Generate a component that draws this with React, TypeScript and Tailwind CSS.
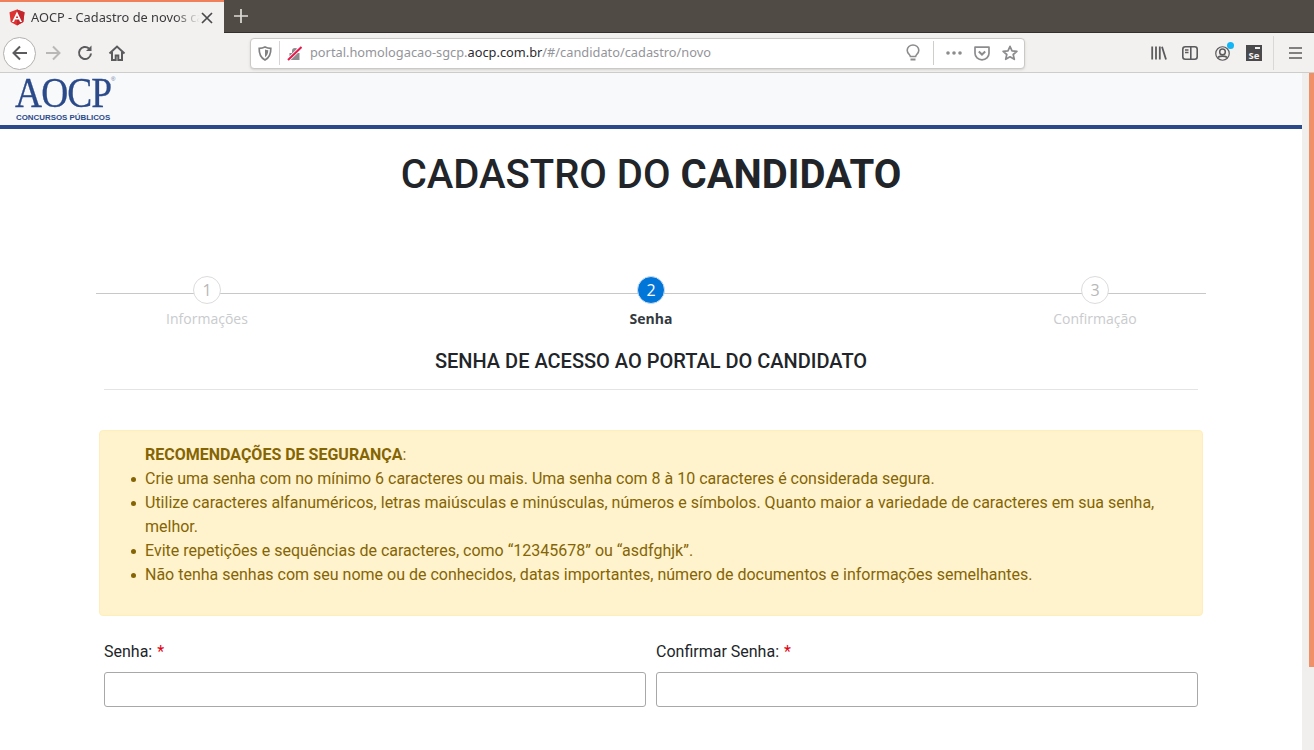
import React from "react";

const I = "#5b5b5d";
const U = "#8c8c8e";

function Favicon() {
  return (
    <svg width="16" height="17" viewBox="0 0 16 17" className="shrink-0">
      <path d="M8 0.5 L15.5 3.2 L14.3 13 L8 16.5 L1.7 13 L0.5 3.2 Z" fill="#dd3333" />
      <path d="M8 0.5 L15.5 3.2 L14.3 13 L8 16.5 Z" fill="#c3262c" />
      <path fillRule="evenodd" d="M8 2.4 L13 13 H11 L10 10.5 H6 L5 13 H3 Z M8 6.4 L6.8 9.1 H9.2 Z" fill="#fff" />
    </svg>
  );
}

function Toolbar() {
  return (
    <div className="flex h-10 shrink-0 items-center border-b border-[#cfcdca] bg-[#f3f1ef] pt-px">
      <div className="ml-[3px] flex h-[33px] w-[33px] items-center justify-center rounded-full border border-[#b3b1af] bg-white">
        <svg width="18" height="18" viewBox="0 0 18 18" fill="none" stroke={I} strokeWidth="2">
          <path d="M16 9H2.5M9 2.5 2.5 9 9 15.5" />
        </svg>
      </div>
      <svg className="ml-[8px]" width="18" height="18" viewBox="0 0 18 18" fill="none" stroke="#b9b8b6" strokeWidth="2">
        <path d="M2 9h13.5M9 2.5 15.5 9 9 15.5" />
      </svg>
      <svg className="ml-[14px]" width="18" height="18" viewBox="0 0 18 18" fill="none" stroke={I} strokeWidth="2">
        <path d="M15 9.5A6 6 0 1 1 13 4.5" />
        <path d="M15.5 1.5v5.5h-5.5z" fill={I} stroke="none" />
      </svg>
      <svg className="ml-[14px]" width="18" height="18" viewBox="0 0 18 18" fill="none" stroke={I} strokeWidth="2">
        <path d="M1.5 9.5 9 2.5l7.5 7" />
        <path d="M4 8v8h3.7v-4.5h2.6V16H14V8" />
      </svg>

      <div className="ml-[124px] flex h-[31px] w-[775px] items-center rounded border border-[#cbc9c6] bg-white shadow-sm">
        <svg className="ml-[7px]" width="14" height="15" viewBox="0 0 14 15" fill="none" stroke="#808082" strokeWidth="1.7">
          <path d="M7 1c2 1 4 1.3 5.8 1.3C13 8 11 12 7 14 3 12 1 8 1.2 2.3 3 2.3 5 2 7 1Z" />
          <path d="M7 3.5c1 .5 2 .7 3.3.8C10.2 7.5 9 10 7 11.3Z" fill="#808082" stroke="none" />
        </svg>
        <div className="ml-[7px] h-[24px] w-px bg-[#d8d6d4]" />
        <svg className="ml-[7px]" width="15" height="15" viewBox="0 0 15 15">
          <path d="M5 7V5a3 3 0 0 1 6 0v2h1.5v7h-10V7Z" fill={U} />
          <path d="M1 14 14.5 1" stroke="#ffffff" strokeWidth="3.6" />
          <path d="M1 14 14.5 1" stroke="#e8174b" strokeWidth="2" />
        </svg>
        <span className="ml-[8px] whitespace-nowrap font-['Noto_Sans',sans-serif] text-[12.8px] text-[#94949a]">
          portal.homologacao-sgcp.<span className="text-[#2c2c30]">aocp.com.br</span>/#/candidato/cadastro/novo
        </span>
        <div className="flex-1" />
        <svg width="14" height="18" viewBox="0 0 14 18" fill="none" stroke={U} strokeWidth="1.6">
          <path d="M4.4 12.5C4 10.5 1.2 9.5 1.2 6.2a5.8 5.2 0 0 1 11.6 0c0 3.3-2.8 4.3-3.2 6.3Z" />
          <path d="M4.5 15.5h5" strokeWidth="2" />
        </svg>
        <div className="ml-[13px] h-[24px] w-px bg-[#d0cecc]" />
        <svg className="ml-[12px]" width="16" height="4" viewBox="0 0 16 4" fill={U}>
          <circle cx="2" cy="2" r="1.8" />
          <circle cx="8" cy="2" r="1.8" />
          <circle cx="14" cy="2" r="1.8" />
        </svg>
        <svg className="ml-[12px]" width="16" height="15" viewBox="0 0 16 15" fill="none" stroke={U} strokeWidth="1.7">
          <path d="M1 1.2h14v6a7 6.6 0 0 1-14 0Z" strokeLinejoin="round" />
          <path d="M4.8 5.6 8 8.6l3.2-3" strokeWidth="2" />
        </svg>
        <svg className="ml-[12px]" width="16" height="16" viewBox="0 0 16 16" fill="none" stroke={U} strokeWidth="1.7" strokeLinejoin="round">
          <path d="M8 1.3 10 5.8l4.9.5-3.7 3.2 1.1 4.8L8 11.8l-4.3 2.5 1.1-4.8L1.1 6.3 6 5.8Z" />
        </svg>
        <div className="w-[6px]" />
      </div>

      <svg className="ml-[126px]" width="16" height="14" viewBox="0 0 16 14" stroke={I} strokeWidth="1.8" fill="none">
        <path d="M1.2 0.5v13M5 0.5v13M8.8 0.5v13M11 0.8l4 12.6" />
      </svg>
      <svg className="ml-[15px]" width="16" height="14" viewBox="0 0 16 14" fill="none" stroke={I} strokeWidth="1.6">
        <rect x="0.8" y="0.8" width="14.4" height="12.4" rx="2.5" />
        <path d="M8.8 1v12" />
        <path d="M3 4h3.5M3 6.5h3.5" strokeWidth="1.4" />
      </svg>
      <div className="relative ml-[17px] h-[15px] w-[15px]">
        <svg width="15" height="15" viewBox="0 0 16 16" fill="none" stroke={I} strokeWidth="1.3">
          <circle cx="8" cy="8" r="7.2" />
          <circle cx="8" cy="6.3" r="3" fill="none" strokeWidth="1.6" />
          <path d="M3.2 12.5c1-2.2 8.6-2.2 9.6 0" strokeWidth="2" />
        </svg>
        <div className="absolute -top-[4px] -right-[4px] h-[7px] w-[7px] rounded-full bg-[#12b5f5]" />
      </div>
      <div className="relative ml-[16px] flex h-[16px] w-[16px] flex-col items-center justify-end bg-[#4a4a4c] font-['Noto_Sans',sans-serif] text-[9.5px] font-bold leading-[11px] text-[#f3f1ef]">
        Se
        <div className="absolute right-[2px] top-[2px] h-[2px] w-[5px] bg-[#f3f1ef]" />
      </div>
      <div className="ml-[11px] h-[34px] w-px bg-[#dad8d6]" />
      <svg className="ml-[15px]" width="13" height="12" viewBox="0 0 13 12" stroke={I} strokeWidth="1.7">
        <path d="M0 1h13M0 6h13M0 11h13" />
      </svg>
    </div>
  );
}

function Step({ n, label, active }: { n: number; label: string; active?: boolean }) {
  return (
    <div className="-mt-[18px] flex w-[222px] flex-col items-center">
      <div
        className={
          active
            ? "flex h-[28px] w-[28px] items-center justify-center rounded-full border border-[#c9dff2] bg-[#0275d8] font-['Open_Sans',sans-serif] text-[16px] text-white"
            : "flex h-[28px] w-[28px] items-center justify-center rounded-full border border-[#dcdcdc] bg-white font-['Open_Sans',sans-serif] text-[16px] text-[#b8b8b8]"
        }
      >
        {n}
      </div>
      <div
        className={
          active
            ? "mt-[5px] font-['Open_Sans',sans-serif] text-[14px] font-bold leading-[19px] text-[#343a40]"
            : "mt-[5px] font-['Open_Sans',sans-serif] text-[14px] leading-[19px] text-[#c9cbcd]"
        }
      >
        {label}
      </div>
    </div>
  );
}

function Field({ label }: { label: string }) {
  return (
    <div className="flex w-[542px] flex-col">
      <div className="h-[24px] text-[16px] leading-[24px] text-[#212529]">
        {label}: <span className="ml-px text-[#e3000f]">*</span>
      </div>
      <input className="mt-[8px] h-[35px] rounded-[3px] border border-[#a8a8a8] bg-white" />
    </div>
  );
}

const li =
  "before:absolute before:-ml-[14px] before:mt-[10px] before:h-[5px] before:w-[5px] before:rounded-full before:bg-[#856404] before:content-['']";

export default function App() {
  return (
    <div className="flex h-[750px] w-[1314px] flex-col overflow-hidden bg-white font-['Roboto',sans-serif]">
      <div className="flex h-[33px] shrink-0 bg-[#504c45]">
        <div className="flex h-[33px] w-[224px] items-center border-t-2 border-[#f0805c] bg-[#f3f1ef] pl-[9px]">
          <Favicon />
          <span className="ml-[6px] w-[169px] overflow-hidden whitespace-nowrap font-['Noto_Sans',sans-serif] text-[12.8px] text-[#3a3a3c] [mask-image:linear-gradient(to_right,black_85%,transparent)]">
            AOCP - Cadastro de novos candidatos
          </span>
          <svg width="12" height="12" viewBox="0 0 12 12" className="ml-[1px]" stroke="#4a4a4c" strokeWidth="1.7">
            <path d="M1 1l10 10M11 1 1 11" />
          </svg>
        </div>
        <div className="flex flex-1 border-b border-[#33312d]">
          <svg width="14" height="14" viewBox="0 0 14 14" className="ml-[10px] mt-[9px]" stroke="#dedcd8" strokeWidth="1.7">
            <path d="M7 0v14M0 7h14" />
          </svg>
        </div>
      </div>
      <Toolbar />

      <div className="flex min-h-0 flex-1">
        <div className="flex min-w-0 flex-1 flex-col">
          <div className="flex h-[52px] shrink-0 flex-col bg-[#f8f9fb] pl-[15px] font-['Liberation_Serif',serif] text-[#2a4a8a]">
            <div className="relative mt-px h-[38px] w-[100px]">
              <div className="origin-left scale-x-[0.87] whitespace-nowrap text-[43px] leading-[38px] tracking-[-1px] [-webkit-text-stroke:0.3px_#2a4a8a]">AOCP</div>
              <span className="absolute -top-px left-[96px] font-['Liberation_Sans',sans-serif] text-[6px] leading-[12px] text-[#5f75a5]">®</span>
            </div>
            <div className="mt-px whitespace-nowrap pl-px font-['Liberation_Sans',sans-serif] text-[7.9px] font-bold leading-[10px]">
              CONCURSOS PÚBLICOS
            </div>
          </div>
          <div className="h-[4px] shrink-0 bg-[#2a4a8a]" />

          <h1 className="mt-[22px] h-[48px] text-center text-[40px] font-medium leading-[48px] text-[#212529]">
            CADASTRO DO <span className="font-bold">CANDIDATO</span>
          </h1>

          <div className="mx-[96px] mt-[94px] flex justify-between border-t border-[#c8c8c8]">
            <Step n={1} label="Informações" />
            <Step n={2} label="Senha" active />
            <Step n={3} label="Confirmação" />
          </div>

          <h2 className="mt-[21px] text-center text-[20px] font-medium leading-[24px] text-[#212529]">
            SENHA DE ACESSO AO PORTAL DO CANDIDATO
          </h2>
          <hr className="mx-[104px] mt-[16px] border-[#e4e4e4]" />

          <div className="mx-[99px] mt-[40px] h-[186px] rounded border border-[#ffeeba] bg-[#fff3cd] pl-[45px] pr-[40px] pt-[12px] text-[16px] leading-[24px] text-[#856404]">
            <div>
              <strong className="font-bold">RECOMENDAÇÕES DE SEGURANÇA</strong>:
            </div>
            <ul className="list-none">
              <li className={li}>Crie uma senha com no mínimo 6 caracteres ou mais. Uma senha com 8 à 10 caracteres é considerada segura.</li>
              <li className={li}>Utilize caracteres alfanuméricos, letras maiúsculas e minúsculas, números e símbolos. Quanto maior a variedade de caracteres em sua senha, melhor.</li>
              <li className={li}>Evite repetições e sequências de caracteres, como “12345678” ou “asdfghjk”.</li>
              <li className={li}>Não tenha senhas com seu nome ou de conhecidos, datas importantes, número de documentos e informações semelhantes.</li>
            </ul>
          </div>

          <div className="mx-[104px] mt-[24px] flex gap-[10px]">
            <Field label="Senha" />
            <Field label="Confirmar Senha" />
          </div>
        </div>

        <div className="flex w-[12px] shrink-0 justify-end bg-[#f0efed]">
          <div className="h-[594px] w-[5px] bg-[#f09068]" />
        </div>
      </div>
    </div>
  );
}
